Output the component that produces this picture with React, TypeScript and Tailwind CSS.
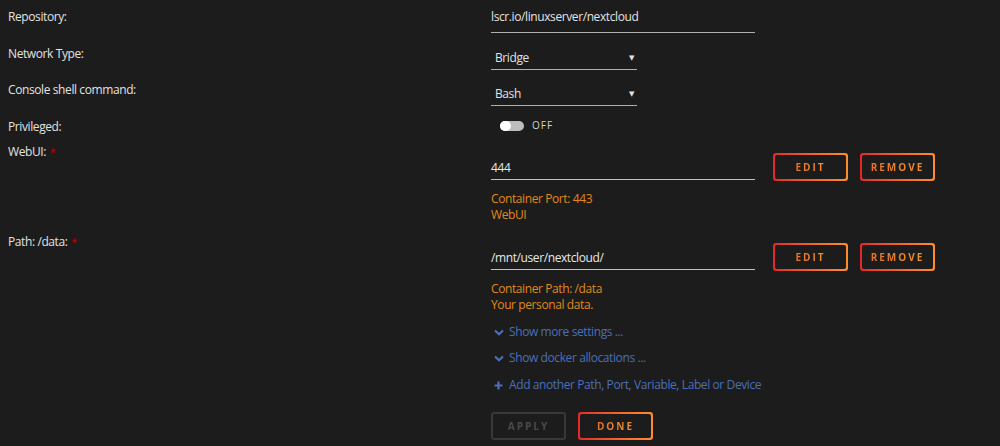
import { ReactNode } from "react";

const font = "font-['Open_Sans',_'DejaVu_Sans',_sans-serif]";

function Label({ children, required }: { children: ReactNode; required?: boolean }) {
  return (
    <div className="pl-2 leading-4">
      {children}
      {required && <span className="ml-1 align-top text-[10px] text-[#c80000]">*</span>}
    </div>
  );
}

function GradientButton({ children, disabled }: { children: string; disabled?: boolean }) {
  if (disabled) {
    return (
      <div className="flex h-[28px] w-[75px] items-center justify-center rounded-[3px] border-2 border-[#383838] text-[10px] font-bold tracking-[2px] text-[#4a4a4a]">
        {children}
      </div>
    );
  }
  return (
    <div className="h-[28px] w-[75px] rounded-[3px] bg-gradient-to-r from-[#e22828] to-[#ff8c2f] p-[2px]">
      <div className="flex h-full w-full items-center justify-center rounded-[2px] bg-[#1c1c1c]">
        <span className="bg-gradient-to-r from-[#e8722a] to-[#f2902f] bg-clip-text text-[10px] font-bold tracking-[2px] text-transparent">
          {children}
        </span>
      </div>
    </div>
  );
}

function Select({ value }: { value: string }) {
  return (
    <div className="flex w-[146px] items-center justify-between border-b border-[#b0b0b0] pb-[3px] pl-1 pr-[3px] pt-[13px] leading-4">
      <span>{value}</span>
      <span className="text-[7px]">▼</span>
    </div>
  );
}

function MappingRow({
  label,
  value,
  lines,
}: {
  label: string;
  value: string;
  lines: string[];
}) {
  return (
    <div className="grid grid-cols-[491px_1fr]">
      <div className="pt-[4px]">
        <Label required>{label}</Label>
      </div>
      <div>
        <div className="flex items-start">
          <div className="w-[264px] border-b border-[#c0c0c0] pb-[3px] pt-[20px] leading-4 text-[#e8e8e8]">
            {value}
          </div>
          <div className="ml-[18px] mt-[13px] flex gap-3">
            <GradientButton>EDIT</GradientButton>
            <GradientButton>REMOVE</GradientButton>
          </div>
        </div>
        <div className="mt-[10px] leading-4 text-[#e0891a]">
          {lines.map((l) => (
            <div key={l}>{l}</div>
          ))}
        </div>
      </div>
    </div>
  );
}

function ChevronDown() {
  return (
    <svg width="10" height="7" viewBox="0 0 10 7" className="shrink-0">
      <path d="M1 1.5 L5 5.2 L9 1.5" fill="none" stroke="currentColor" strokeWidth="2.2" />
    </svg>
  );
}

function Plus() {
  return (
    <svg width="9" height="9" viewBox="0 0 9 9" className="shrink-0">
      <path d="M4.5 0.5 V8.5 M0.5 4.5 H8.5" fill="none" stroke="currentColor" strokeWidth="2.2" />
    </svg>
  );
}

export default function App() {
  return (
    <div className={`min-h-screen bg-[#1c1c1c] text-[12px] tracking-[-0.4px] text-[#e2e2e2] ${font}`}>
      {/* Repository */}
      <div className="grid h-[37px] grid-cols-[491px_1fr]">
        <div className="pt-[9px]">
          <Label>Repository:</Label>
        </div>
        <div className="w-[264px] self-start border-b border-[#b0b0b0] pb-[7px] pt-[9px] leading-4">
          lscr.io/linuxserver/nextcloud
        </div>
      </div>

      {/* Network type */}
      <div className="grid h-[36px] grid-cols-[491px_1fr]">
        <div className="pt-[9px]">
          <Label>Network Type:</Label>
        </div>
        <div>
          <Select value="Bridge" />
        </div>
      </div>

      {/* Console shell */}
      <div className="grid h-[36px] grid-cols-[491px_1fr]">
        <div className="pt-[9px]">
          <Label>Console shell command:</Label>
        </div>
        <div>
          <Select value="Bash" />
        </div>
      </div>

      {/* Privileged */}
      <div className="grid h-[31px] grid-cols-[491px_1fr]">
        <div className="pt-[10px]">
          <Label>Privileged:</Label>
        </div>
        <div className="flex items-center gap-[8px] pl-[9px] pt-[2px]">
          <div className="flex h-[10px] w-[24px] items-center rounded-full bg-[#bdbdbd]">
            <div className="h-[10px] w-[11px] rounded-full bg-white" />
          </div>
          <span className="text-[10px] tracking-[1px] text-[#d0d0d0]">OFF</span>
        </div>
      </div>

      <MappingRow label="WebUI:" value="444" lines={["Container Port: 443", "WebUI"]} />
      <div className="h-[7px]" />
      <MappingRow
        label="Path: /data:"
        value="/mnt/user/nextcloud/"
        lines={["Container Path: /data", "Your personal data."]}
      />

      <div className="ml-[491px] mt-[11px] flex flex-col gap-[10px] leading-4 text-[#4b6fba]">
        <div className="flex items-center gap-[5px] pl-[3px]">
          <ChevronDown />
          <span>Show more settings ...</span>
        </div>
        <div className="flex items-center gap-[5px] pl-[3px]">
          <ChevronDown />
          <span>Show docker allocations ...</span>
        </div>
        <div className="mt-[1px] flex items-center gap-[6px] pl-[3px]">
          <Plus />
          <span>Add another Path, Port, Variable, Label or Device</span>
        </div>
      </div>

      <div className="ml-[491px] mt-[19px] flex gap-3">
        <GradientButton disabled>APPLY</GradientButton>
        <GradientButton>DONE</GradientButton>
      </div>
    </div>
  );
}
